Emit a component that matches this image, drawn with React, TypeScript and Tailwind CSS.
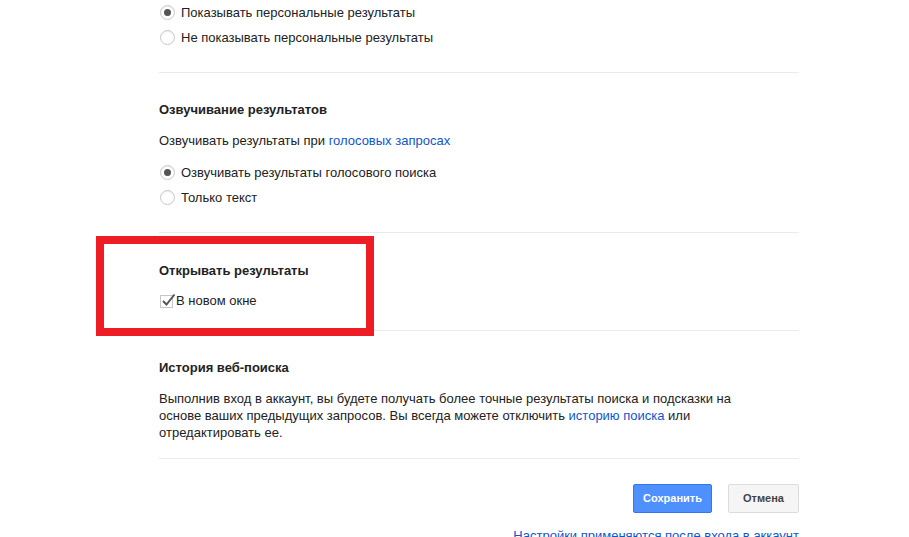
import React from "react";

const font = { fontFamily: '"Liberation Sans", Arial, sans-serif' };

function Radio({ checked, label }: { checked?: boolean; label: string }) {
  return (
    <label className="flex h-[25px] items-center">
      <span className="ml-px flex h-[15px] w-[15px] items-center justify-center rounded-full border border-[#c8c8c8] bg-white shadow-[inset_0_1px_1px_rgba(0,0,0,0.08)]">
        {checked && <span className="h-[7px] w-[7px] rounded-full bg-[#555]" />}
      </span>
      <span className="ml-[6px] text-[13px] leading-4 text-[#222]">{label}</span>
    </label>
  );
}

function Divider() {
  return <div className="h-px bg-[#ebebeb]" />;
}

export default function App() {
  return (
    <div className="relative h-[537px] w-[909px] overflow-hidden bg-white" style={font}>
      <div className="ml-[159px] w-[640px]">
        <Radio checked label="Показывать персональные результаты" />
        <Radio label="Не показывать персональные результаты" />
        <div className="h-[22px]" />
        <Divider />

        <section className="pt-[29px] pb-[22px]">
          <h3 className="text-[13px] font-bold leading-4 text-[#222]">Озвучивание результатов</h3>
          <p className="mt-[15px] text-[13px] leading-4 text-[#222]">
            Озвучивать результаты при <a className="text-[#1155cc]">голосовых запросах</a>
          </p>
          <div className="mt-[11px]">
            <Radio checked label="Озвучивать результаты голосового поиска" />
            <Radio label="Только текст" />
          </div>
        </section>
        <Divider />

        <section className="pt-[30px] pb-[21px]">
          <h3 className="text-[13px] font-bold leading-4 text-[#222]">Открывать результаты</h3>
          <label className="mt-[14px] flex h-4 items-center">
            <span className="relative ml-px h-[13px] w-[13px] border border-[#c6c6c6] bg-white">
              <svg className="absolute -top-[3px] left-0" width="15" height="14" viewBox="0 0 15 14">
                <path d="M2 8 L5.5 11.5 L13.5 1.5" fill="none" stroke="#555" strokeWidth="2" />
              </svg>
            </span>
            <span className="ml-[3px] text-[13px] leading-4 text-[#222]">В новом окне</span>
          </label>
        </section>
        <Divider />

        <section className="pt-[29px] pb-[17px]">
          <h3 className="text-[13px] font-bold leading-4 text-[#222]">История веб-поиска</h3>
          <p className="mt-[14px] w-[600px] text-[13px] leading-[17px] text-[#222]">
            Выполнив вход в аккаунт, вы будете получать более точные результаты поиска и подсказки на основе ваших предыдущих запросов. Вы всегда можете отключить{" "}
            <a className="text-[#1155cc]">историю поиска</a> или отредактировать ее.
          </p>
        </section>
        <Divider />

        <div className="mt-[25px] flex justify-end gap-4">
          <button className="h-[29px] w-[79px] rounded-[2px] border border-[#3079ed] bg-[#4d90fe] text-[11px] font-bold text-white">
            Сохранить
          </button>
          <button className="h-[29px] w-[71px] rounded-[2px] border border-[#dcdcdc] bg-[#f5f5f5] text-[11px] font-bold text-[#444]">
            Отмена
          </button>
        </div>
        <p className="mt-[15px] text-right text-[13px] leading-4">
          <a className="text-[#1155cc]">Настройки применяются после входа в аккаунт</a>
        </p>
      </div>

      <div className="pointer-events-none absolute left-[96px] top-[236px] h-[100px] w-[278px] border-8 border-[#ee1c25]" />
    </div>
  );
}
